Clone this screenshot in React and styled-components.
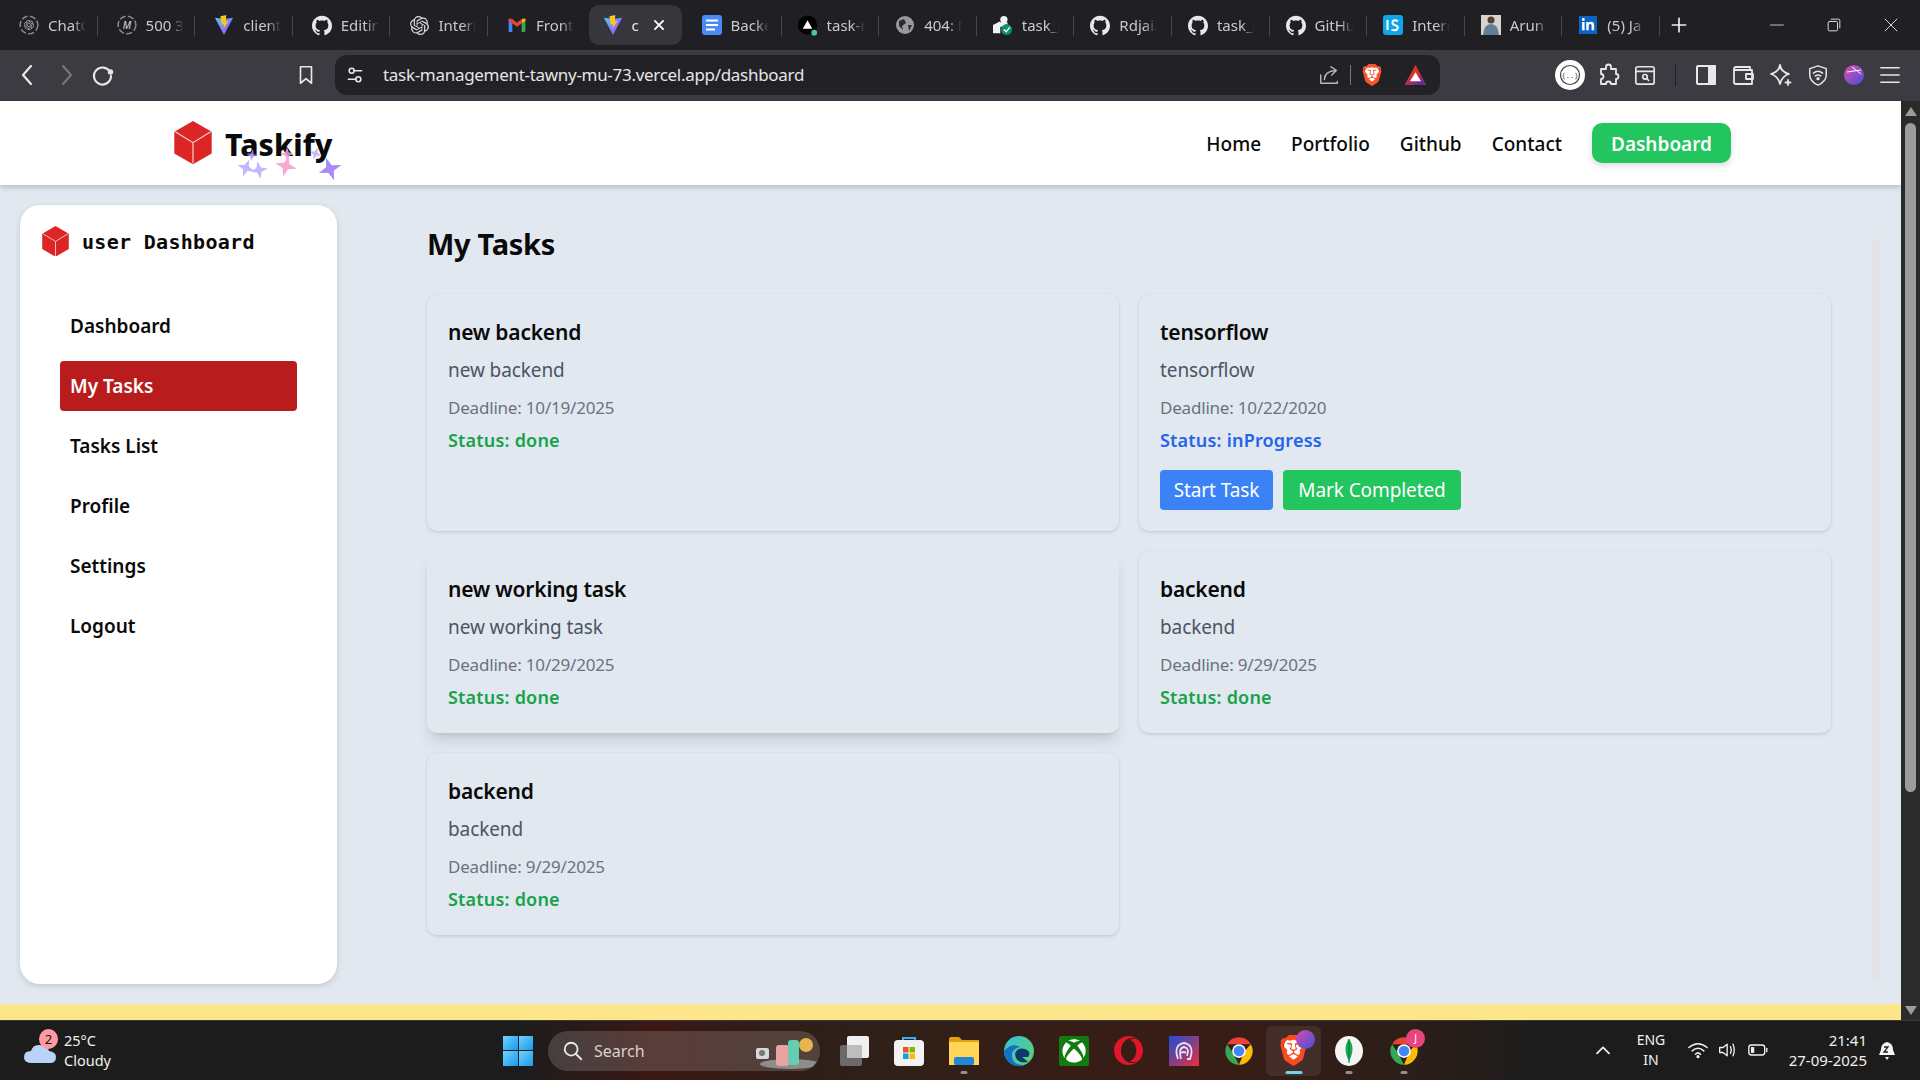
import React from "react";
import styled, { createGlobalStyle } from "styled-components";
import { SiOpenai, SiGithub, SiBrave, SiOpera } from "react-icons/si";
import { FaLinkedinIn, FaXbox } from "react-icons/fa";

const GlobalStyle = createGlobalStyle`
  html, body {
    margin: 0;
    padding: 0;
    height: 100%;
    overflow: hidden;
    font-family: "Noto Sans", "Open Sans", sans-serif;
  }
  * { box-sizing: border-box; }
`;

const Screen = styled.div`
  width: 1920px;
  height: 1080px;
  display: flex;
  flex-direction: column;
  overflow: hidden;
  background: #1c1c1c;
`;

/* ---- browser tabs ---- */
const TabStrip = styled.div`
  height: 50px;
  flex: none;
  display: flex;
  background: #1f1f24;
  padding-top: 5px;
`;

const Tab = styled.div`
  width: ${(p) => p.$w || 97.6}px;
  height: 40px;
  flex: none;
  display: flex;
  align-items: center;
  padding-left: ${(p) => p.$pad || 19}px;
  gap: 9px;
  position: relative;
  color: #c9c9cd;
  font-size: 15px;
  &::after {
    content: "";
    display: ${(p) => (p.$last ? "none" : "block")};
    position: absolute;
    right: 0;
    top: 11px;
    height: 20px;
    width: 1px;
    background: #46464c;
  }
`;

const ActiveTab = styled(Tab)`
  background: #36363c;
  border-radius: 10px;
  width: 93px;
  margin: 0 4px 0 3px;
  padding-left: 14px;
  color: #ececec;
  &::after { display: none; }
`;

const TabIcon = styled.span`
  width: 20px;
  height: 20px;
  flex: none;
  display: flex;
  align-items: center;
  justify-content: center;
  position: relative;
  color: ${(p) => p.$color || "#e8e8e8"};
`;

const TabTitle = styled.span`
  width: ${(p) => p.$w || 38}px;
  overflow: hidden;
  white-space: nowrap;
  -webkit-mask-image: linear-gradient(90deg, #000 65%, transparent);
  mask-image: linear-gradient(90deg, #000 65%, transparent);
`;

const CloseX = styled.span`
  display: flex;
  margin-left: -1px;
`;

const PlusBtn = styled.div`
  width: 48px;
  height: 40px;
  margin-left: -5px;
  display: flex;
  align-items: center;
  justify-content: center;
`;

const WinControls = styled.div`
  margin-left: auto;
  display: flex;
  height: 40px;
  align-items: center;
  padding-right: 22px;
  gap: 43px;
`;

/* ---- browser toolbar ---- */
const Toolbar = styled.div`
  height: 51px;
  flex: none;
  background: #3b3b41;
  display: flex;
  align-items: center;
  padding: 0 0 1px 9px;
`;

const ToolBtn = styled.div`
  width: ${(p) => p.$w || 38}px;
  height: 38px;
  flex: none;
  display: flex;
  align-items: center;
  justify-content: center;
  margin-left: ${(p) => p.$ml || 0}px;
`;

const AddressBar = styled.div`
  width: 1105px;
  height: 40px;
  flex: none;
  margin-left: 10px;
  margin-right: 114px;
  border-radius: 12px;
  background: #212126;
  display: flex;
  align-items: center;
  padding-left: 10px;
  padding-right: 13px;
  color: #e6e6e6;
  font-size: 17px;
`;

const UrlText = styled.span`
  margin: -1px auto 0 18px;
  letter-spacing: -0.3px;
`;

const TinySep = styled.span`
  width: 1px;
  height: ${(p) => p.$h || 20}px;
  flex: none;
  background: ${(p) => p.$c || "#77777c"};
  margin: 0 ${(p) => p.$m || 12}px;
`;

const BraveMark = styled.span`
  position: relative;
  display: flex;
  &::before {
    content: "";
    position: absolute;
    inset: 14% 20% 16%;
    background: #fff;
    border-radius: 30%;
  }
  svg { position: relative; }
`;

/* ---- viewport ---- */
const Viewport = styled.div`
  height: 919px;
  flex: none;
  display: flex;
`;

const Page = styled.div`
  width: 1901px;
  flex: none;
  background: #e2e8f0;
  display: flex;
  flex-direction: column;
  position: relative;
`;

const Navbar = styled.header`
  height: 84px;
  flex: none;
  background: #fff;
  display: flex;
  align-items: center;
  padding: 0 170px 0 174px;
  box-shadow: 0 2px 6px rgba(0, 0, 0, 0.2);
  position: relative;
  z-index: 2;
`;

const Brand = styled.div`
  display: flex;
  align-items: center;
  gap: 13px;
  position: relative;
`;

const BrandName = styled.span`
  font-size: 30px;
  font-weight: 800;
  color: #0a0a0a;
  letter-spacing: 0.1px;
  line-height: 40px;
  margin-top: 4px;
`;

const Star = styled.svg`
  position: absolute;
  left: ${(p) => p.$x}px;
  top: ${(p) => p.$y}px;
  width: ${(p) => p.$s}px;
  height: ${(p) => p.$s}px;
  transform: rotate(${(p) => p.$r || 0}deg);
  fill: ${(p) => p.$c};
  opacity: ${(p) => p.$o || 1};
`;

const NavLinks = styled.nav`
  margin-left: auto;
  display: flex;
  align-items: center;
  gap: 30px;
`;

const NavLink = styled.a`
  font-size: 19px;
  font-weight: 500;
  color: #0a0a0a;
  padding-top: 2px;
`;

const NavButton = styled.a`
  width: 139px;
  height: 40px;
  padding-top: 2px;
  border-radius: 10px;
  background: #22c55e;
  color: #fff;
  font-size: 19px;
  font-weight: 600;
  display: flex;
  align-items: center;
  justify-content: center;
  box-shadow: 0 3px 6px rgba(0, 0, 0, 0.14);
`;

const Body = styled.div`
  flex: 1;
  display: flex;
  padding: 20px 0 0 20px;
`;

const Sidebar = styled.aside`
  width: 317px;
  height: 779px;
  flex: none;
  background: #fff;
  border-radius: 20px;
  box-shadow: 0 2px 6px rgba(0, 0, 0, 0.14);
  padding: 20px 40px 0 22px;
`;

const SideHead = styled.div`
  display: flex;
  align-items: center;
  gap: 13px;
  height: 32px;
  margin-bottom: 44px;
`;

const SideTitle = styled.span`
  font-family: "DejaVu Sans Mono", monospace;
  font-size: 20px;
  font-weight: 700;
  letter-spacing: 0.3px;
  color: #0a0a0a;
  padding-top: 2px;
`;

const SideNav = styled.div`
  margin-left: 18px;
  display: flex;
  flex-direction: column;
  gap: 10px;
`;

const SideItem = styled.a`
  height: 50px;
  padding: 0 10px;
  border-radius: 4px;
  display: flex;
  align-items: center;
  font-size: 19px;
  font-weight: 600;
  color: ${(p) => (p.$active ? "#fff" : "#0a0a0a")};
  background: ${(p) => (p.$active ? "#b91c1c" : "transparent")};
`;

const Main = styled.main`
  width: 1404px;
  margin-left: 90px;
  flex: none;
`;

const Heading = styled.h1`
  margin: 16px 0 27px;
  font-size: 29px;
  line-height: 46px;
  font-weight: 700;
  color: #0a0a0a;
  letter-spacing: -0.3px;
`;

const TaskGrid = styled.div`
  display: grid;
  grid-template-columns: 692px 692px;
  gap: 20px;
`;

const Card = styled.div`
  background: #e2e8f0;
  border-radius: 10px;
  padding: 19px 21px 23px;
  box-shadow: ${(p) =>
    p.$raised
      ? "0 10px 15px -3px rgba(0,0,0,.12), 0 4px 6px -4px rgba(0,0,0,.12)"
      : "0 2px 4px -1px rgba(0,0,0,.14), 0 0 3px rgba(0,0,0,.05)"};
`;

const CardTitle = styled.h3`
  margin: 0;
  font-size: 21px;
  line-height: 38px;
  font-weight: 600;
  color: #0a0a0a;
  letter-spacing: -0.2px;
`;

const CardDesc = styled.p`
  margin: 0;
  font-size: 19px;
  line-height: 38px;
  color: #4b5563;
  letter-spacing: -0.1px;
`;

const CardDeadline = styled.p`
  margin: 0;
  font-size: 17px;
  line-height: 38px;
  color: #6b7280;
  letter-spacing: -0.2px;
`;

const CardStatus = styled.p`
  margin: 0;
  font-size: 18px;
  line-height: 26px;
  font-weight: 600;
  letter-spacing: 0.2px;
  color: ${(p) => (p.$status === "done" ? "#16a34a" : "#2563eb")};
`;

const Actions = styled.div`
  display: flex;
  gap: 10px;
  margin: 17px 0 -2px;
`;

const ActionBtn = styled.button`
  height: 40px;
  border: 0;
  border-radius: 4px;
  padding: 0;
  width: ${(p) => p.$w}px;
  font: inherit;
  font-size: 19px;
  letter-spacing: -0.1px;
  color: #fff;
  background: ${(p) => p.$bg};
`;

const YellowBar = styled.div`
  position: absolute;
  left: 0;
  right: 0;
  bottom: 0;
  height: 16px;
  background: #fde68a;
`;

const SideStrip = styled.div`
  position: absolute;
  left: 1872px;
  top: 137px;
  bottom: 40px;
  width: 8px;
  border-radius: 4px;
  background: #e4e4e6;
`;

/* ---- page scrollbar ---- */
const ScrollTrack = styled.div`
  width: 19px;
  flex: none;
  background: #2b2b2b;
  display: flex;
  flex-direction: column;
  align-items: center;
  padding: 6px 0 5px;
`;

const ScrollThumb = styled.div`
  width: 11px;
  height: 669px;
  margin-top: 7px;
  border-radius: 6px;
  background: #9c9c9c;
`;

const ScrollArrow = styled.span`
  width: 0;
  height: 0;
  border-left: 6px solid transparent;
  border-right: 6px solid transparent;
  ${(p) => (p.$down ? "border-top: 9px solid #9c9c9c; margin-top: auto;" : "border-bottom: 9px solid #9c9c9c;")}
`;

/* ---- windows taskbar ---- */
const Taskbar = styled.footer`
  height: 60px;
  flex: none;
  display: flex;
  align-items: center;
  border-top: 1px solid #3a3a3a;
  background: linear-gradient(
    90deg,
    #1c1c1c 0,
    #1c1c1c 27%,
    #3a1814 34%,
    #2e2018 44%,
    #3a1c16 62%,
    #2b1e18 74%,
    #1c1c1c 80%
  );
`;

const Weather = styled.div`
  width: 500px;
  flex: none;
  display: flex;
  align-items: center;
  padding-left: 24px;
  gap: 8px;
  position: relative;
  color: #f0f0f0;
  font-size: 14.5px;
  line-height: 20px;
`;

const WeatherText = styled.div`
  margin-top: -2px;
`;

const WeatherBadge = styled.span`
  position: absolute;
  left: 39px;
  top: -3px;
  width: 19px;
  height: 20px;
  border-radius: 50%;
  background: #ff9aa2;
  color: #111;
  font-size: 13px;
  line-height: 20px;
  text-align: center;
`;

const WinLogo = styled.div`
  width: 30px;
  height: 30px;
  flex: none;
  margin-left: 3px;
  display: grid;
  grid-template-columns: 1fr 1fr;
  gap: 1px;
`;

const WinPane = styled.span`
  background: linear-gradient(135deg, #6fd3fb, #1a98ee);
`;

const SearchPill = styled.div`
  width: 272px;
  height: 40px;
  flex: none;
  margin-left: 15px;
  border-radius: 20px;
  background: rgba(255, 255, 255, 0.16);
  display: flex;
  align-items: center;
  padding-left: 14px;
  gap: 10px;
  color: #d8d2ce;
  font-size: 16px;
  position: relative;
  overflow: hidden;
`;

const SearchArt = styled.svg`
  position: absolute;
  right: 0;
  top: 0;
`;

const AppRow = styled.div`
  display: flex;
  margin-left: 6px;
`;

const AppSlot = styled.div`
  width: 55px;
  height: 50px;
  flex: none;
  display: flex;
  align-items: center;
  justify-content: center;
  position: relative;
  border-radius: 6px;
  ${(p) => p.$active && "background: rgba(255,255,255,.08);"}
  &::after {
    content: "";
    display: ${(p) => (p.$dot ? "block" : "none")};
    position: absolute;
    bottom: 2px;
    left: 50%;
    transform: translateX(-50%);
    width: ${(p) => (p.$active ? 17 : 7)}px;
    height: 3px;
    border-radius: 2px;
    background: ${(p) => (p.$active ? "#6fd8e4" : "#8f8f8f")};
  }
`;

const XboxTile = styled.span`
  width: 30px;
  height: 30px;
  border-radius: 2px;
  background: #107c10;
  display: flex;
  align-items: center;
  justify-content: center;
`;

const AppBadge = styled.span`
  position: absolute;
  right: ${(p) => p.$r || 4}px;
  top: ${(p) => p.$t || 2}px;
  width: 19px;
  height: 19px;
  border-radius: 50%;
  background: ${(p) => p.$bg};
  color: #fff;
  font-size: 10px;
  line-height: 19px;
  text-align: center;
`;

const Tray = styled.div`
  margin-left: auto;
  display: flex;
  align-items: center;
  color: #f0f0f0;
  font-size: 14px;
  padding-right: 24px;
  margin-top: -2px;
`;

const TrayGap = styled.span`
  width: 10px;
  flex: none;
`;

const Lang = styled.div`
  width: 40px;
  margin: 0 17px 0 20px;
  text-align: center;
  line-height: 20px;
`;

const Clock = styled.div`
  width: 82px;
  margin-left: 17px;
  margin-right: 11px;
  font-size: 15px;
  text-align: right;
  line-height: 20px;
  white-space: nowrap;
`;

const LinkedTile = styled.span`
  width: 18px;
  height: 18px;
  background: #0a66c2;
  display: flex;
  align-items: center;
  justify-content: center;
`;

/* ---- drawn icons ---- */
const Cube = ({ size = 38 }) => (
  <svg width={size} height={size * 1.14} viewBox="0 0 38 44">
    <polygon points="19,0 38,11 38,33 19,44 0,33 0,11" fill="#dc2626" />
    <path d="M1 11 L19 22 L37 11 M19 22 V43" fill="none" stroke="#fbd5d5" strokeWidth="1.2" />
  </svg>
);

const Vite = () => (
  <svg width="21" height="20" viewBox="0 0 20 22">
    <defs>
      <linearGradient id="vg" x1="0" y1="0" x2="1" y2="1">
        <stop offset="0" stopColor="#41d1ff" />
        <stop offset="1" stopColor="#bd34fe" />
      </linearGradient>
    </defs>
    <path d="M0 3 L10 4.5 L20 3 L10 22 Z" fill="url(#vg)" />
    <path d="M12.5 0 L6 1.5 L7.5 11 L10 10 L9.5 15 L15 6.5 L12 7 Z" fill="#ffc517" />
  </svg>
);

const Ring = ({ children }) => (
  <svg width="26" height="26" viewBox="0 0 26 26">
    <circle cx="13" cy="13" r="11.5" fill="none" stroke="#8a8a8e" strokeWidth="2" strokeDasharray="8 3" />
    {children}
  </svg>
);

const Gmail = () => (
  <svg width="18" height="14" viewBox="0 0 18 15">
    <path d="M0 2 L4 5 V15 H1 Q0 15 0 14 Z" fill="#4285f4" />
    <path d="M18 2 L14 5 V15 H17 Q18 15 18 14 Z" fill="#34a853" />
    <path d="M14 1 L18 0.5 V3 L14 6 Z" fill="#fbbc04" />
    <path d="M0 0.5 L4 1 L9 5 L14 1 V6 L9 9.5 L0 3 Z" fill="#ea4335" />
  </svg>
);

const Docs = () => (
  <svg width="20" height="20" viewBox="0 0 20 20">
    <rect width="20" height="20" rx="3" fill="#4a8af4" />
    <path d="M4 5.5 H16 M4 10 H16 M4 14.5 H13" stroke="#fff" strokeWidth="2" />
  </svg>
);

const Vercel = () => (
  <svg width="21" height="21" viewBox="0 0 21 21">
    <circle cx="10" cy="10" r="10" fill="#000" />
    <path d="M10 5 L15 14 H5 Z" fill="#fff" />
    <circle cx="17" cy="18" r="3" fill="#3ecf8e" />
  </svg>
);

const Globe = () => (
  <svg width="18" height="18" viewBox="0 0 18 18">
    <circle cx="9" cy="9" r="9" fill="#9a9a9e" />
    <path d="M3 5 L8 3 L10 7 L6 10 L7 14 L3 10 Z M12 9 L16 9 L13 15 Z" fill="#2b2b30" />
  </svg>
);

const TaskBadge = () => (
  <svg width="22" height="22" viewBox="0 0 22 22">
    <circle cx="12" cy="5" r="4" fill="#f2f2f2" />
    <path d="M0 11 L8 7 V20 H0 Z M8 8 H16 V13 H8 Z" fill="#f2f2f2" />
    <circle cx="15" cy="16" r="6" fill="#0c8f6c" />
    <path d="M12 16 L14.5 18.5 L18.5 13.5" fill="none" stroke="#fff" strokeWidth="1.5" />
  </svg>
);

const IsLogo = () => (
  <svg width="20" height="20" viewBox="0 0 20 20">
    <rect width="20" height="20" rx="3" fill="#0ea5e9" />
    <path d="M4.5 5 V15 M15 6 Q9 4 9.5 8 Q10 10 13 10.5 Q16 12 14 14.5 Q11 16 8.5 14.5" fill="none" stroke="#fff" strokeWidth="2" />
  </svg>
);

const Portrait = () => (
  <svg width="20" height="20" viewBox="0 0 20 20">
    <rect width="20" height="20" fill="#d8d4cc" />
    <circle cx="10" cy="5" r="3.5" fill="#5b4030" />
    <path d="M2 20 Q3 9 10 9 Q17 9 18 20 Z" fill="#5f7f99" />
  </svg>
);

const Chrome = () => (
  <svg width="30" height="30" viewBox="0 0 48 48">
    <path d="M24 2 A22 22 0 0 1 43 13 H24 Z M5 13 A22 22 0 0 1 24 2 V13 Z" fill="#ea4335" />
    <path d="M43 13 A22 22 0 0 1 24 46 L33 24 Z" fill="#fbbc04" />
    <path d="M24 46 A22 22 0 0 1 5 13 L16 30 Z" fill="#34a853" />
    <circle cx="24" cy="24" r="11" fill="#fff" />
    <circle cx="24" cy="24" r="8.5" fill="#4285f4" />
  </svg>
);

const Stroke = ({ w = 20, h = 20, vb = "0 0 24 24", sw = 2, c = "#e8e8e8", children }) => (
  <svg width={w} height={h} viewBox={vb} fill="none" stroke={c} strokeWidth={sw} strokeLinecap="round" strokeLinejoin="round">
    {children}
  </svg>
);

const tabs = [
  { title: "ChatG", icon: <Ring><SiOpenai x="6.5" y="6.5" size={13} color="#b4b4b8" /></Ring> },
  { title: "500 3", icon: <Ring><text x="13" y="18" textAnchor="middle" fontSize="13" fontStyle="italic" fill="#ddd" fontFamily="Noto Sans">M</text></Ring> },
  { title: "client", icon: <Vite /> },
  { title: "Editin", icon: <SiGithub size={21} /> },
  { title: "Intern", icon: <SiOpenai size={19} color="#d8d8d8" /> },
  { title: "Front", icon: <Gmail />, next: true },
];

const tabsAfter = [
  { title: "Backe", icon: <Docs /> },
  { title: "task-r", icon: <Vercel /> },
  { title: "404: N", icon: <Globe /> },
  { title: "task_r", icon: <TaskBadge /> },
  { title: "Rdjai/", icon: <SiGithub size={21} /> },
  { title: "task_r", icon: <SiGithub size={21} /> },
  { title: "GitHu", icon: <SiGithub size={21} /> },
  { title: "Intern", icon: <IsLogo /> },
  { title: "Arun", icon: <Portrait /> },
  { title: "(5) Ja", icon: <LinkedTile><FaLinkedinIn size={14} color="#fff" /></LinkedTile> },
];

const tasks = [
  { title: "new backend", deadline: "10/19/2025", status: "done" },
  { title: "tensorflow", deadline: "10/22/2020", status: "inProgress" },
  { title: "new working task", deadline: "10/29/2025", status: "done", raised: true },
  { title: "backend", deadline: "9/29/2025", status: "done" },
  { title: "backend", deadline: "9/29/2025", status: "done" },
];

const stars = [
  { x: 63, y: 38, s: 18, c: "#c4b5fd", r: 20 },
  { x: 72, y: 28, s: 12, c: "#a78bfa", o: 0.8, r: 10 },
  { x: 76, y: 40, s: 18, c: "#c4b5fd", r: -10 },
  { x: 101, y: 34, s: 22, c: "#f9a8d4", r: 15 },
  { x: 106, y: 26, s: 14, c: "#f9a8d4", o: 0.85, r: 0 },
  { x: 135, y: 26, s: 13, c: "#a78bfa", o: 0.6, r: 20 },
  { x: 144, y: 36, s: 24, c: "#a78bfa", r: -20 },
];

const sideLinks = ["Dashboard", "My Tasks", "Tasks List", "Profile", "Settings", "Logout"];

function TaskCard({ task }) {
  return (
    <Card $raised={task.raised}>
      <CardTitle>{task.title}</CardTitle>
      <CardDesc>{task.title}</CardDesc>
      <CardDeadline>Deadline: {task.deadline}</CardDeadline>
      <CardStatus $status={task.status}>Status: {task.status}</CardStatus>
      {task.status === "inProgress" && (
        <Actions>
          <ActionBtn $w={113} $bg="#3b82f6">Start Task</ActionBtn>
          <ActionBtn $w={178} $bg="#22c55e">Mark Completed</ActionBtn>
        </Actions>
      )}
    </Card>
  );
}

function App() {
  return (
    <Screen>
      <GlobalStyle />
      <TabStrip>
        {tabs.map((t) => (
          <Tab key={t.title} $last={t.next}>
            <TabIcon>{t.icon}</TabIcon>
            <TabTitle>{t.title}</TabTitle>
          </Tab>
        ))}
        <ActiveTab>
          <TabIcon><Vite /></TabIcon>
          <TabTitle $w={12}>c</TabTitle>
          <CloseX>
            <Stroke w={14} h={14} c="#fff" sw={3.2}><path d="M5 5 L19 19 M19 5 L5 19" /></Stroke>
          </CloseX>
        </ActiveTab>
        {tabsAfter.map((t, i) => (
          <Tab key={i} $pad={16} $w={i === 0 ? 96 : 97.6}>
            <TabIcon>{t.icon}</TabIcon>
            <TabTitle>{t.title}</TabTitle>
          </Tab>
        ))}
        <PlusBtn>
          <Stroke w={20} h={20} c="#f0f0f0" sw={2}><path d="M12 4 V20 M4 12 H20" /></Stroke>
        </PlusBtn>
        <WinControls>
          <Stroke w={14} h={14} sw={1.4}><path d="M1 12 H23" /></Stroke>
          <Stroke w={14} h={14} sw={1.6}><rect x="2" y="6" width="16" height="16" rx="2" /><path d="M7 2 H20 Q22 2 22 4 V17" /></Stroke>
          <Stroke w={14} h={14} sw={1.6}><path d="M2 2 L22 22 M22 2 L2 22" /></Stroke>
        </WinControls>
      </TabStrip>

      <Toolbar>
        <ToolBtn><Stroke w={24} h={24} sw={2.2}><path d="M15 3 L7 12 L15 21" /></Stroke></ToolBtn>
        <ToolBtn><Stroke w={24} h={24} sw={2} c="#77777c"><path d="M9 3 L17 12 L9 21" /></Stroke></ToolBtn>
        <ToolBtn $w={36}><Stroke w={24} h={24} sw={2.2}><path d="M19 9 A8.5 8.5 0 1 0 20 13" /><circle cx="19.5" cy="9" r="1.6" fill="#e8e8e8" /></Stroke></ToolBtn>
        <ToolBtn $ml={166}><Stroke w={22} h={24} sw={1.8}><path d="M6 3 H18 V21 L12 16 L6 21 Z" /></Stroke></ToolBtn>
        <AddressBar>
          <Stroke w={20} h={20} sw={1.8}>
            <circle cx="8" cy="7" r="3" /><path d="M11 7 H20" />
            <circle cx="16" cy="17" r="3" /><path d="M4 17 H13" />
          </Stroke>
          <UrlText>task-management-tawny-mu-73.vercel.app/dashboard</UrlText>
          <Stroke w={22} h={22} sw={1.6} c="#b8b8bb"><path d="M3 12 V21 H21 V19 M7 17 Q7 8 19 7 M14 3 L20 7 L15 12" /></Stroke>
          <TinySep $h={20} $m={10} />
          <ToolBtn $w={22}><BraveMark><SiBrave size={22} color="#fb542b" /></BraveMark></ToolBtn>
          <ToolBtn $w={24} $ml={20}>
            <svg width="23" height="20" viewBox="0 0 24 22">
              <defs><linearGradient id="bat" x1="0" y1="0" x2="0.6" y2="1"><stop offset="0" stopColor="#f0402a" /><stop offset=".55" stopColor="#d9302f" /><stop offset="1" stopColor="#662d91" /></linearGradient></defs>
              <path d="M12 0 L24 22 H0 Z" fill="url(#bat)" />
              <path d="M12 8 L18 18 H6 Z" fill="#fff" />
            </svg>
          </ToolBtn>
        </AddressBar>
        <ToolBtn $w={32}>
          <svg width="30" height="30" viewBox="0 0 30 30">
            <circle cx="15" cy="15" r="15" fill="#fff" />
            <circle cx="15" cy="15" r="9.5" fill="none" stroke="#444" strokeWidth="1.2" />
            <text x="15" y="18" textAnchor="middle" fontSize="7" fill="#444" fontFamily="DejaVu Sans Mono">{"{..}"}</text>
          </svg>
        </ToolBtn>
        <ToolBtn $w={24} $ml={11}><Stroke w={24} h={24} sw={1.8}><path d="M9 4 a2.5 2.5 0 0 1 5 0 V6 H19 V11 a2.5 2.5 0 0 1 0 5 V21 H14 a2.5 2.5 0 0 0 -5 0 H4 V16 a2.5 2.5 0 0 0 0 -5 V6 H9 Z" /></Stroke></ToolBtn>
        <ToolBtn $w={24} $ml={12}><Stroke w={22} h={24} sw={1.8}><rect x="2" y="3" width="20" height="19" rx="2" /><path d="M2 8 H22" /><circle cx="12" cy="14" r="2.5" /><path d="M14 16 L16 18" /></Stroke></ToolBtn>
        <TinySep $h={22} $c="#1f1f24" $m={18} />
        <ToolBtn $w={24}><Stroke w={24} h={24} sw={2}><rect x="3" y="3" width="18" height="18" rx="1" /><rect x="15" y="3" width="6" height="18" fill="#e8e8e8" /></Stroke></ToolBtn>
        <ToolBtn $w={24} $ml={13}><Stroke w={24} h={24} sw={1.8}><path d="M19 7 V4 H5 Q3 4 3 6 V19 Q3 21 5 21 H21 V7 H4" /><rect x="15" y="11" width="7" height="5" /></Stroke></ToolBtn>
        <ToolBtn $w={24} $ml={14}><Stroke w={24} h={24} sw={1.8}><path d="M11 2 Q12 9 20 11 Q13 13 11 21 Q9 13 2 11 Q10 9 11 2 Z" /><path d="M19 17 V22 M16.5 19.5 H21.5" /></Stroke></ToolBtn>
        <ToolBtn $w={24} $ml={13}><Stroke w={22} h={24} sw={1.6}><path d="M12 2 L21 5 V12 Q21 19 12 23 Q3 19 3 12 V5 Z" /><path d="M7 10 Q12 6 17 10 M9 13 Q12 11 15 13" /><circle cx="12" cy="16" r="1" /></Stroke></ToolBtn>
        <ToolBtn $w={22} $ml={13}>
          <svg width="20" height="20" viewBox="0 0 20 20">
            <defs><linearGradient id="av" x1="0" y1="0" x2="1" y2="1"><stop offset="0" stopColor="#e84bb0" /><stop offset="1" stopColor="#4350d6" /></linearGradient></defs>
            <circle cx="10" cy="10" r="10" fill="url(#av)" />
            <path d="M3 7 L17 5 M8 2 L17 9" stroke="#fff" strokeWidth="1" />
          </svg>
        </ToolBtn>
        <ToolBtn $w={24} $ml={13}><Stroke w={24} h={22} sw={1.6}><path d="M2 4 H22 M2 12 H22 M2 20 H22" /></Stroke></ToolBtn>
      </Toolbar>

      <Viewport>
        <Page>
          <Navbar>
            <Brand>
              <Cube />
              <BrandName>Taskify</BrandName>
              {stars.map((s, i) => (
                <Star key={i} viewBox="0 0 24 24" $x={s.x} $y={s.y} $s={s.s} $c={s.c} $r={s.r} $o={s.o}>
                  <path d="M12 0 L15 9 L24 12 L15 15 L12 24 L9 15 L0 12 L9 9 Z" />
                </Star>
              ))}
            </Brand>
            <NavLinks>
              <NavLink>Home</NavLink>
              <NavLink>Portfolio</NavLink>
              <NavLink>Github</NavLink>
              <NavLink>Contact</NavLink>
              <NavButton>Dashboard</NavButton>
            </NavLinks>
          </Navbar>
          <Body>
            <Sidebar>
              <SideHead>
                <Cube size={27} />
                <SideTitle>user Dashboard</SideTitle>
              </SideHead>
              <SideNav>
                {sideLinks.map((l) => (
                  <SideItem key={l} $active={l === "My Tasks"}>{l}</SideItem>
                ))}
              </SideNav>
            </Sidebar>
            <Main>
              <Heading>My Tasks</Heading>
              <TaskGrid>
                {tasks.map((t, i) => (
                  <TaskCard key={i} task={t} />
                ))}
              </TaskGrid>
            </Main>
          </Body>
          <SideStrip />
          <YellowBar />
        </Page>
        <ScrollTrack>
          <ScrollArrow />
          <ScrollThumb />
          <ScrollArrow $down />
        </ScrollTrack>
      </Viewport>

      <Taskbar>
        <Weather>
          <svg width="32" height="24" viewBox="0 0 32 24">
            <path d="M8 24 Q0 24 0 18 Q0 12 7 12 Q9 5 16 6 Q24 7 25 12 Q32 13 32 18 Q32 24 26 24 Z" fill="#b9d3f7" />
          </svg>
          <WeatherBadge>2</WeatherBadge>
          <WeatherText>25°C<br />Cloudy</WeatherText>
        </Weather>
        <WinLogo><WinPane /><WinPane /><WinPane /><WinPane /></WinLogo>
        <SearchPill>
          <Stroke w={22} h={22} sw={2} c="#e8e8e8"><circle cx="10" cy="10" r="7" /><path d="M15 15 L21 21" /></Stroke>
          Search
          <SearchArt width="66" height="40" viewBox="0 0 66 40">
            <ellipse cx="36" cy="33" rx="30" ry="5" fill="#8d8d8d" />
            <rect x="2" y="17" width="13" height="11" rx="2" fill="#d9d9d9" />
            <circle cx="8" cy="22" r="3" fill="#777" />
            <rect x="22" y="14" width="13" height="21" rx="3" fill="#eaa3a3" />
            <rect x="34" y="9" width="11" height="25" rx="3" fill="#67cdb0" />
            <circle cx="52" cy="14" r="7" fill="#e8b450" />
          </SearchArt>
        </SearchPill>
        <AppRow>
          <AppSlot>
            <svg width="30" height="30" viewBox="0 0 30 30">
              <rect x="1" y="9" width="22" height="21" rx="2" fill="#6a6a6a" />
              <rect x="8" y="0" width="22" height="22" rx="2" fill="#f0f0f0" />
              <rect x="8" y="9" width="15" height="13" fill="#bdbdbd" />
            </svg>
          </AppSlot>
          <AppSlot>
            <svg width="30" height="30" viewBox="0 0 30 30">
              <path d="M9 6 V2 H21 V6" fill="none" stroke="#29b6f6" strokeWidth="2" />
              <rect y="4" width="30" height="26" rx="4" fill="#f2f2f2" />
              <rect x="9" y="11" width="5.5" height="5.5" fill="#f25022" />
              <rect x="15.5" y="11" width="5.5" height="5.5" fill="#7fba00" />
              <rect x="9" y="17.5" width="5.5" height="5.5" fill="#00a4ef" />
              <rect x="15.5" y="17.5" width="5.5" height="5.5" fill="#ffb900" />
            </svg>
          </AppSlot>
          <AppSlot $dot>
            <svg width="30" height="28" viewBox="0 0 30 28">
              <path d="M0 2 Q0 0 2 0 H10 L13 3 H30 V28 H0 Z" fill="#e0a30d" />
              <rect y="5" width="30" height="23" fill="#ffd658" />
              <rect x="5" y="20" width="20" height="8" rx="2" fill="#1e88d6" />
            </svg>
          </AppSlot>
          <AppSlot>
            <svg width="30" height="30" viewBox="0 0 30 30">
              <defs><linearGradient id="eg" x1="0" y1="0" x2="1" y2="1"><stop offset="0" stopColor="#36c2d8" /><stop offset="1" stopColor="#5fd16b" /></linearGradient></defs>
              <circle cx="15" cy="15" r="15" fill="url(#eg)" />
              <path d="M0 15 A15 15 0 0 0 21 29 Q10 30 8 21 Q7 13 16 11 Q8 6 0 15 Z" fill="#1273c4" />
              <path d="M11 18 Q13 11 21 13 Q28 16 24 21 H18 Q22 24 24 26 Q12 28 11 18 Z" fill="#12386b" />
            </svg>
          </AppSlot>
          <AppSlot><XboxTile><FaXbox size={24} color="#fff" /></XboxTile></AppSlot>
          <AppSlot><SiOpera size={29} color="#e0162b" /></AppSlot>
          <AppSlot>
            <svg width="30" height="30" viewBox="0 0 30 30">
              <defs><linearGradient id="pg" x1="0" y1="0" x2="1" y2="1"><stop offset="0" stopColor="#1d4ed8" /><stop offset="1" stopColor="#e8303a" /></linearGradient></defs>
              <rect width="30" height="30" fill="url(#pg)" />
              <path d="M9 23 Q4 9 15 7 Q26 9 21 23 H18 M12 23 Q9 12 15 11 Q21 12 18 20 M12 17 Q15 15 17 17" fill="none" stroke="#e8e0f5" strokeWidth="1.8" />
            </svg>
          </AppSlot>
          <AppSlot><Chrome /></AppSlot>
          <AppSlot $active $dot>
            <BraveMark><SiBrave size={31} color="#fb4a1e" /></BraveMark>
            <AppBadge $r={6} $t={4} $bg="linear-gradient(135deg,#d84bb0,#4350d6)" />
          </AppSlot>
          <AppSlot $dot>
            <svg width="28" height="30" viewBox="0 0 28 30">
              <ellipse cx="14" cy="15" rx="14" ry="15" fill="#f5f5f5" />
              <path d="M14 3 Q21 12 14 25 Q7 12 14 3 Z" fill="#13aa52" />
              <path d="M14 3 V27" stroke="#0b6e3a" strokeWidth="1" />
            </svg>
          </AppSlot>
          <AppSlot $dot>
            <Chrome />
            <AppBadge $r={6} $t={3} $bg="#e8457f">J</AppBadge>
          </AppSlot>
        </AppRow>
        <Tray>
          <Stroke w={16} h={16} sw={2.6} c="#f0f0f0"><path d="M3 17 L12 8 L21 17" /></Stroke>
          <Lang>ENG<br />IN</Lang>
          <Stroke w={20} h={18} sw={1.8} c="#f0f0f0" vb="0 0 24 20"><path d="M1 7 Q12 -2 23 7 M5 11 Q12 5 19 11 M9 15 Q12 12 15 15" /><circle cx="12" cy="18" r="1" fill="#f0f0f0" /></Stroke>
          <TrayGap />
          <Stroke w={20} h={18} sw={1.6} c="#f0f0f0" vb="0 0 24 20"><path d="M2 7 V13 H6 L11 17 V3 L6 7 Z M15 6 Q17 10 15 14 M18 3 Q21 10 18 17" /></Stroke>
          <TrayGap />
          <Stroke w={20} h={14} sw={1.6} c="#f0f0f0" vb="0 0 24 16"><rect x="1" y="2" width="19" height="12" rx="3" /><rect x="3.5" y="4.5" width="4" height="7" fill="#f0f0f0" stroke="none" /><path d="M22.5 6 V10" /></Stroke>
          <Clock>21:41<br />27-09-2025</Clock>
          <svg width="18" height="20" viewBox="0 0 18 20">
            <path d="M9 2 Q3 3 3 10 L1 15 H17 L15 10 Q15 3 9 2 Z M7 17 H11 L9 20 Z" fill="#f5f5f5" />
            <path d="M6 7 H10 L6 12 H10" fill="none" stroke="#222" strokeWidth="1.3" />
          </svg>
        </Tray>
      </Taskbar>
    </Screen>
  );
}

export default App;
